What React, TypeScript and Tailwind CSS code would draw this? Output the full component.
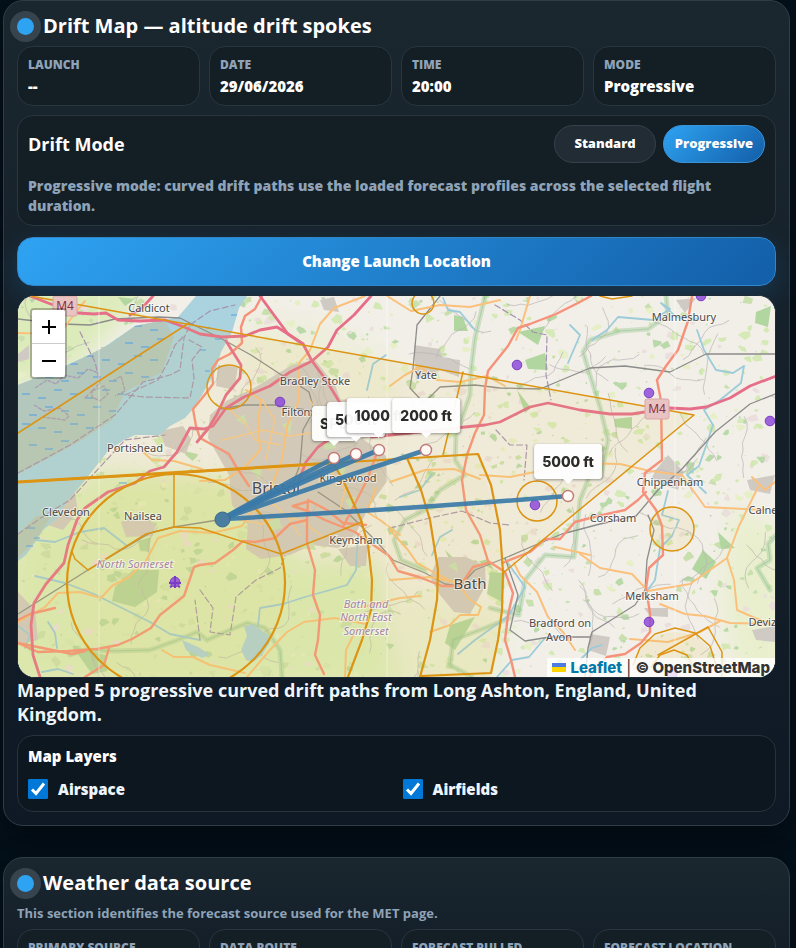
import type { ReactNode } from "react";

const LEFT = 18;
const TOP = 296;
const WIDTH = 757;
const HEIGHT = 381;

type Label = { x: number; y: number; text: string; size?: number; area?: boolean };

const places: Label[] = [
  { x: 149, y: 312, text: "Caldicot" },
  { x: 135, y: 452, text: "Portishead" },
  { x: 66, y: 516, text: "Clevedon" },
  { x: 143, y: 520, text: "Nailsea" },
  { x: 315, y: 385, text: "Bradley Stoke" },
  { x: 296, y: 416, text: "Filton" },
  { x: 276, y: 494, text: "Bristol", size: 16 },
  { x: 348, y: 482, text: "Kingswood" },
  { x: 356, y: 544, text: "Keynsham" },
  { x: 426, y: 379, text: "Yate" },
  { x: 470, y: 589, text: "Bath", size: 15 },
  { x: 684, y: 321, text: "Malmesbury" },
  { x: 670, y: 486, text: "Chippenham" },
  { x: 613, y: 522, text: "Corsham" },
  { x: 763, y: 514, text: "Calne" },
  { x: 652, y: 600, text: "Melksham" },
  { x: 768, y: 626, text: "Devizes" },
  { x: 560, y: 627, text: "Bradford on" },
  { x: 559, y: 641, text: "Avon" },
  { x: 135, y: 568, text: "North Somerset", area: true },
  { x: 366, y: 608, text: "Bath and", area: true },
  { x: 366, y: 621, text: "North East", area: true },
  { x: 366, y: 635, text: "Somerset", area: true },
];

const airfields = [
  [280, 402], [517, 365], [649, 393], [701, 296], [770, 421], [535, 505], [649, 622], [672, 675], [175, 582],
];

const spokes = [
  { label: "SFC", x: 334, y: 458, path: "M222 519Q278 487 334 458" },
  { label: "500 ft", x: 356, y: 454, path: "M222 519Q289 485 356 454" },
  { label: "1000 ft", x: 379, y: 450, path: "M222 519Q300 482 379 450" },
  { label: "2000 ft", x: 426, y: 450, path: "M222 519Q324 483 426 450" },
  { label: "5000 ft", x: 568, y: 496, path: "M222 519Q395 510 568 496" },
];

const motorways = [
  "M30 296L48 303L62 308L78 313L94 314L106 313L118 320L140 321L165 320L184 327L200 334L222 337L245 336L260 330L277 327L288 334L303 344L312 361L326 380L340 403L350 425L372 437L400 434L430 431L465 427L485 425L500 422L530 407L548 403L580 410L610 414L632 414L670 408L690 409L706 407L730 398L750 386L776 376",
  "M260 296L271 311L288 334L303 344",
  "M371 296L354 315L337 330L328 347L312 361L290 372L270 386L244 397L226 408L213 426L204 429L190 428L177 452L164 467L150 471L135 483L108 492L85 508L77 520L68 545L64 563L46 584L34 603L31 625L33 655L40 677",
  "M226 341L241 365L240 378L226 395L217 414L208 429L197 442",
  "M153 296L142 308L130 315",
  "M298 482L306 462L318 447L350 425",
];

const trunks = [
  "M262 296L255 309L245 316L241 327L242 343L230 354L218 360L212 369L213 384L203 397L193 409L196 426L200 438L218 448L229 454L237 468L249 486",
  "M591 296L578 303L556 314L530 324L518 328L508 346L488 371L485 388L484 415L475 433L467 455L462 480L466 510L480 535L488 561L505 572L513 593L508 615L505 640L511 660L515 677",
  "M692 296L688 321L678 350L666 366L657 380L661 401L662 460L645 473L643 492L656 510L662 526L663 555L649 568L646 588L650 613L650 632L641 643L625 654L607 657L589 677",
  "M488 563L473 567L460 586L442 586L419 577L398 571L389 556L355 532L325 520L307 511L293 506",
  "M308 500L307 520L307 543L315 570L313 595L320 615L318 640L315 655L324 674",
  "M307 520L290 524L275 538L255 542L243 541L233 550L215 563L200 565L194 567L184 596L160 615L151 628L132 639L118 645L97 649L68 651L38 652L18 643",
  "M109 648L104 665L85 677", "M85 651L72 654L18 643",
  "M560 539L575 522L598 516L625 510L638 500L646 492",
  "M502 563L530 552L545 539L560 539", "M378 450L367 480L343 527",
  "M293 506L310 501L327 510L343 523L366 525",
  "M18 620L30 614L55 608",
];

const primaries = [
  "M365 296L334 308L320 324L310 350L299 363L299 400L287 426L282 460L272 485L251 513L242 526L212 533L180 531L158 538L146 561L129 577L112 586L101 598L80 592L58 593L45 607L18 622",
  "M246 390L261 400L258 422L260 450L246 466L225 480L200 481",
  "M530 296L520 330L516 340", "M390 386L405 375L420 367L437 380L460 382L487 376L505 386",
  "M390 530L408 550L417 563L435 573L460 586", "M390 580L430 577L455 582L466 580",
  "M460 586L469 599L481 607L478 615L460 615L450 625L430 632",
  "M362 607L400 598L420 596", "M247 677L270 650L287 632L304 622L335 618L366 624",
  "M345 677L346 650L356 630", "M514 563L520 575L537 592L548 617L563 632L575 650",
  "M480 475L510 477L540 471L575 463L620 464L650 471L682 475L705 507L765 510",
  "M580 554L600 568L632 574L648 591L690 584L720 563L727 558L739 526L758 487",
  "M727 558L734 580L737 610L755 618L769 623", "M660 604L685 614L705 616L730 623L775 624",
  "M630 639L668 642L700 632L720 621", "M775 482L765 490L752 477",
  "M18 333L60 334L75 313L85 301", "M143 452L152 460L174 461L202 469",
  "M162 650L174 657L193 657L210 665L245 673", "M387 296L411 311L440 305L470 307L500 300",
  "M390 482L425 470L454 469L480 479", "M376 488L367 512L380 520L400 535",
  "M555 547L590 555",
];

const streets = [
  "M230 410L246 424L255 440L280 445", "M222 440L240 436L262 430L290 436L318 432",
  "M268 470L290 464L312 470L335 466", "M255 498L275 505L290 520L300 536",
  "M240 520L262 524L280 515L300 520L322 536", "M330 470L345 490L340 510",
  "M262 400L275 420L270 440L266 460", "M310 400L320 418L335 430",
];

const rails = [
  "M18 614L88 570L150 533L174 527L218 520L258 503L270 492L293 483L300 465L303 430L314 410L309 392L294 382L280 374L251 355L222 339L180 318L158 317L115 319L90 325L62 324L18 319",
  "M440 296L417 325L413 369L410 388L423 402L430 397L440 387L475 385L500 388L540 389L590 368L625 366L670 372L706 354L718 354L775 354",
  "M318 492L345 510L375 540L393 560L425 573L445 584L460 586L475 570L505 558L533 546L562 534L600 524L636 516",
  "M636 516L658 490L681 470L715 432L750 404L775 394",
  "M648 515L654 530L647 560L645 590L635 605L608 622L592 632L588 648L585 677",
  "M505 558L518 595L510 630L525 641L550 637L590 637",
  "M220 409L245 405L275 405L312 411L335 420",
];

const rivers = [
  "M432 555L440 537L452 530", "M18 430L36 428",
  "M592 340L607 330L618 317L653 320L670 309L661 303L676 317L697 319",
  "M697 330L704 350L716 370L733 373L744 366L741 383L720 400L704 410L713 425L706 446L699 466L687 475L706 493",
  "M668 491L662 515L679 520L672 536L660 548L655 580L645 594",
  "M36 540L55 542L80 532L104 528L126 545",
  "M35 576L65 583L94 594L120 607L150 622L170 634L200 640",
  "M42 672L58 669L73 674", "M48 622L55 633L57 648",
  "M358 535L356 570L347 585L330 590L305 597L283 604L260 608L258 626",
  "M443 298L448 310L460 312L475 330", "M497 677L512 660L529 657L545 638",
  "M570 325L580 335L568 363", "M386 355L373 364L367 390",
  "M400 497L420 490L432 474", "M505 559L525 587L509 615L500 622L475 640L458 654",
  "M18 626L30 635L25 648", "M581 659L592 648L602 645",
];

const protectedEdges = [
  "M485 296L475 338L471 370L470 395L456 435L455 460L465 475L440 490L425 510L405 520L394 540L401 560L425 570",
  "M592 470L580 500L574 557L545 555L525 580L519 615L490 608",
  "M666 296L668 315L648 329L620 331L590 340L583 352L590 375L600 407L608 440L601 476",
  "M775 536L768 544L770 560L757 568L770 590",
  "M207 640L230 630L247 623L265 628L280 650L282 677",
  "M70 655L85 650L115 651L150 650L175 641L197 632L207 640",
  "M472 677L450 665L453 640L480 630L510 618",
];

const boundaries = [
  "M80 332L95 362L100 383L85 398", "M183 337L175 345L168 362L158 380L125 395L145 397L190 398L194 378L192 360L202 347L189 340",
  "M18 473L70 445L115 415L143 382L170 375L180 370L184 338L190 325L210 311L235 305",
  "M18 534L45 515L70 500L100 467L125 440L165 435",
  "M495 305L520 320L533 332L547 335L546 375L551 400", "M496 430L510 445L527 445L524 480",
  "M200 590L213 608L210 632L230 635L236 597L256 580L280 568L285 556",
  "M390 528L430 518L462 511L490 523L510 525", "M200 640L195 600",
];

const woods = [
  "M115 587L133 570L159 570L157 592L135 607L112 601Z", "M138 541L151 537L149 552L140 550Z",
  "M454 315L463 317L468 331L454 331Z", "M518 332L545 326L538 345Z",
  "M525 360L545 353L548 370L528 369Z", "M445 550L462 566L488 559L494 570L475 560L455 572Z",
  "M490 572L505 573L502 602L487 594Z", "M718 532L735 548L721 549Z",
  "M703 550L716 562L706 579L692 569Z", "M756 312L771 306L768 327L755 323Z",
  "M450 625L475 617L455 650L445 643Z", "M72 646L105 655L107 671L92 674Z",
  "M118 297L135 299L125 306Z", "M185 646L203 654L192 658Z",
  "M614 419L632 417L632 429L615 427Z", "M517 390L531 408L525 413Z",
];

const settlements = [
  "M226 401L254 388L292 365L315 360L335 385L352 431L386 456L388 480L370 505L355 535L338 548L312 545L290 555L261 559L246 549L248 525L232 505L229 475L208 438L210 415Z",
  "M335 400L375 398L388 431L360 440Z",
  "M218 365L238 367L234 390L216 386Z", "M160 431L183 426L191 439L186 454L165 446Z",
  "M121 522L141 514L156 525L152 536L126 537Z", "M60 498L75 492L78 512L63 530L48 525L57 512Z",
  "M338 549L368 545L366 566L350 566Z", "M414 345L440 349L442 358L460 360L459 377L440 370L416 380Z",
  "M438 557L466 557L485 566L486 585L470 614L454 612L440 595L430 577Z",
  "M655 471L668 455L684 472L678 490L651 480Z", "M747 480L775 475L770 494L750 490Z",
  "M644 608L668 608L668 617L650 616Z", "M590 634L610 637L606 656L588 650Z",
  "M18 592L35 610L38 640L18 645Z", "M18 354L29 345L29 359L18 362Z",
  "M676 300L696 298L685 313Z", "M320 300L334 297L339 312L324 310Z",
  "M35 320L57 318L60 327L35 329Z", "M752 630L775 626L775 642L756 640Z",
];

const parks = [
  "M268 520L278 516L282 528L270 531Z", "M250 470L262 466L260 480Z", "M322 440L334 436L336 448L325 450Z",
  "M345 500L356 496L352 512Z", "M300 548L312 540L316 550Z", "M236 420L244 414L248 426Z",
  "M335 470L346 464L344 476Z", "M282 425L292 420L290 434Z", "M448 566L456 562L458 572Z",
];

const airspaceBold = [
  "M18 482L174 473L333 463L478 454L491 485L500 530L503 572L502 610L498 640L491 673L421 676",
  "M333 463L343 480L361 520L368 545L372 580L371 610L362 640L348 677",
  "M407 458L421 490L430 520L438 570L437 600L430 640L420 677",
];

const airspaceLines = [
  "M30 296L694 415L503 573", "M18 433L189 323", "M463 372L443 455",
  "M174 473L174 527L146 534L88 570L75 559L72 552", "M174 527L200 528L281 554L362 522",
  "M658 655L708 627L722 652V677", "M633 665L640 648L655 634L675 628L695 633L710 646L716 665",
  "M651 667L660 655L674 650L687 655L693 667", "M600 296L612 299L632 296",
];

const mudflat =
  "M18 385L55 371L85 357L110 344L135 326L165 320L174 337L162 372L125 392L112 420L82 440L55 455L18 474Z";

// Repeatable noise keeps the fields and lanes in the same place on every render.
function noise(seed: number) {
  const value = Math.sin(seed * 127.1 + 311.7) * 43758.5453;
  return value - Math.floor(value);
}

const fields = Array.from({ length: 1700 }, (_, i) => {
  const x = LEFT + noise(i + 1) * WIDTH;
  const y = TOP + noise(i + 2001) * HEIGHT;
  const r = 0.8 + noise(i + 4001) ** 2 * 5;
  const corners = [0, 1, 2, 3, 4].map((n) => {
    const angle = n * 1.257 + noise(i + n * 17);
    const reach = r * (0.6 + noise(i * 3 + n) * 0.8);
    return `${(x + Math.cos(angle) * reach).toFixed(1)} ${(y + Math.sin(angle) * reach * 0.8).toFixed(1)}`;
  });
  return { d: `M${corners.join("L")}Z`, tone: i % 6 };
});

const fieldTones = ["#c9e0ae", "#d6eab8", "#b9d9a8", "#e6efc6", "#eadfdc", "#d3e8b2"];

const lanes = Array.from({ length: 85 }, (_, i) => {
  let x = LEFT + noise(i + 51) * WIDTH;
  let y = TOP + noise(i + 951) * HEIGHT;
  let heading = noise(i + 71) * 6.28;
  let d = `M${x.toFixed(1)} ${y.toFixed(1)}`;
  for (let n = 0; n < 9; n += 1) {
    heading += (noise(i * 11 + n) - 0.5) * 1.1;
    x += Math.cos(heading) * 7;
    y += Math.sin(heading) * 7;
    d += `L${x.toFixed(1)} ${y.toFixed(1)}`;
  }
  return d;
});

const shore =
  "M18 385L60 368L100 350L135 326L165 320L178 317L196 296H247L239 308L232 332L221 352L215 372L206 388L194 408L185 418L170 426L160 435L135 435L124 440L108 451L93 470L82 484L68 500L58 518L43 530L36 541L26 555L18 561Z";

const mudDashes = Array.from({ length: 80 }, (_, i) => ({
  x: 22 + (i % 10) * 16 + (Math.floor(i / 10) % 2) * 7,
  y: 322 + Math.floor(i / 10) * 17 + (i % 3) * 4,
}));

function Lines({ paths, stroke, width, dash, opacity }: {
  paths: string[]; stroke: string; width: number; dash?: string; opacity?: number;
}) {
  return (
    <g fill="none" stroke={stroke} strokeWidth={width} strokeDasharray={dash} opacity={opacity} strokeLinejoin="round" strokeLinecap="round">
      {paths.map((d) => <path key={d} d={d} />)}
    </g>
  );
}

function Motorway({ x, y }: { x: number; y: number }) {
  return (
    <g>
      <rect x={x - 12} y={y - 10} width="24" height="20" rx="2" fill="#e8c3c1" stroke="#d9a5a8" />
      <text x={x} y={y + 4} textAnchor="middle" fontSize="12" fill="#8b3045">M4</text>
    </g>
  );
}

function MapDrawing() {
  return (
    <svg viewBox="18 296 757 381" className="block h-full w-full font-['Noto_Sans',sans-serif]" role="img" aria-label="Map of drift paths around Bristol">
      <defs>
        <clipPath id="mud"><path d={mudflat} /></clipPath>
        <filter id="soften"><feGaussianBlur stdDeviation="12" /></filter>
      </defs>
      <rect x="18" y="296" width="757" height="381" fill="#f2efe9" />
      <g filter="url(#soften)">
        <path d="M0 280H160L80 365L0 395Z" fill="#dcebb9" />
        <path d="M10 540L100 470L240 480L300 560L380 560L400 690H0Z" fill="#d9edbb" />
        <path d="M240 310L330 320L400 360V450L240 380Z" fill="#eeeedb" />
        <path d="M400 590L510 610L500 690H400Z" fill="#e9efd6" />
        <path d="M735 500L790 540V690H740L720 600Z" fill="#e9efcd" />
      </g>
      {fields.map((f, i) => <path key={i} d={f.d} fill={fieldTones[f.tone]} />)}
      <g fill="#b2d6a0">{woods.map((d) => <path key={d} d={d} />)}</g>
      <g fill="#d0cac4">{settlements.map((d) => <path key={d} d={d} />)}</g>
      <g fill="#c8dfb4">{parks.map((d) => <path key={d} d={d} />)}</g>
      <Lines paths={protectedEdges} stroke="#a9cf9f" width={5} opacity={0.5} />
      <Lines paths={protectedEdges} stroke="#86b98a" width={1} opacity={0.45} />
      <Lines paths={lanes} stroke="#bbb7b6" width={0.9} opacity={0.8} />
      <path d={shore} fill="#aad3df" />
      <path d="M244 626L253 624L268 635L270 642L262 655L253 662L246 660L241 650L247 636Z" fill="#aad3df" />
      <path d="M182 640L200 648L210 655L202 658L186 650Z" fill="#aad3df" />
      <path d={mudflat} fill="#b3c7bd" />
      <path d="M18 534L36 516L52 515L36 540L18 558Z" fill="#b3c7bd" />
      <g stroke="#4f9fe8" strokeWidth="1.2" clipPath="url(#mud)">
        {mudDashes.map((m, i) => <path key={i} d={`M${m.x} ${m.y}h8`} />)}
      </g>
      <path d="M27 528h8M26 546h7M34 538h6M200 350h6M205 371h5M215 339h6M231 315h6M206 328h5M119 483h8" stroke="#4f9fe8" strokeWidth="1.2" />
      <path d="M35 388l12-8 9 4 8-9 14 3 10-9 11 4M34 405l10 6 16-3 9 8-4 4-22-3M92 391l12-5 4 8-8 7-8-4zM113 381l8-5 4 15-10 5" fill="none" stroke="#a99bb1" strokeWidth="1.3" strokeDasharray="4 1" />
      <Lines paths={rivers} stroke="#9ccbd9" width={1.8} />
      <Lines paths={boundaries} stroke="#a493ae" width={1.2} dash="6 3" />
      <Lines paths={rails} stroke="#8c8c8a" width={1.3} />
      <Lines paths={streets} stroke="#f8c78c" width={1.4} />
      <Lines paths={primaries} stroke="#fac07c" width={2} />
      <Lines paths={trunks} stroke="#f6917b" width={2.4} />
      <Lines paths={motorways} stroke="#e66e89" width={2.8} />
      <path d="M99 296V677M387 296V677M675 296V677" stroke="#fff" opacity="0.55" />

      <g fill="#e6c45a">
        <path d="M30 296L694 415L503 573L498 640L491 677H18V433L189 323Z" fillOpacity="0.11" />
        <path d="M18 482L478 454L500 530L502 610L491 677H18Z" fillOpacity="0.06" />
        <circle cx="176" cy="583" r="110" fillOpacity="0.06" />
        <circle cx="672" cy="529" r="22" fillOpacity="0.13" />
        <circle cx="675" cy="675" r="43" fillOpacity="0.16" />
      </g>
      <g fill="none" stroke="#dc9412">
        <circle cx="176" cy="583" r="109" strokeWidth="2.2" />
        <circle cx="229" cy="387" r="22" strokeWidth="1.4" />
        <circle cx="423" cy="303" r="11" strokeWidth="1.4" />
        <circle cx="537" cy="501" r="20" strokeWidth="1.5" />
        <circle cx="672" cy="529" r="22" strokeWidth="1.5" />
      </g>
      <Lines paths={airspaceBold} stroke="#dc9412" width={2.2} />
      <Lines paths={airspaceLines} stroke="#dc9412" width={1.5} />
      <path d="M18 482L333 463" stroke="#dc9412" strokeWidth="3" />

      <Motorway x={65} y={306} />
      <Motorway x={657} y={409} />
      {places.map((p) => (
        <text
          key={p.text + p.y}
          x={p.x}
          y={p.y}
          textAnchor="middle"
          fontSize={p.size ?? 11}
          fontStyle={p.area ? "italic" : undefined}
          fill={p.area ? "#a684a3" : "#4c4a48"}
          stroke="#fff"
          strokeWidth="2"
          strokeOpacity="0.6"
          paintOrder="stroke"
        >
          {p.text}
        </text>
      ))}
      <g fill="#8f4bd8" stroke="#7a3cc4" fillOpacity="0.85">
        {airfields.map(([x, y]) => <circle key={`${x}-${y}`} cx={x} cy={y} r="4.8" />)}
        <path d="M175 576v12M169 583h12M172 586l-2 1M178 586l2 1" strokeWidth="2" />
      </g>
      <g fill="none" stroke="#3a79a8" strokeWidth="4.6" strokeOpacity="0.92" strokeLinecap="round">
        {spokes.map((s) => <path key={s.label} d={s.path} />)}
      </g>
      <circle cx="222.500" cy="519.500" r="7.500" fill="#4a7d9f" stroke="#386c8e" />
      <g fill="#fffaf5" stroke="#c07a78" strokeWidth="1.4">
        {spokes.map((s) => <circle key={s.label} cx={s.x} cy={s.y} r="5.500" />)}
      </g>
    </svg>
  );
}

function DriftMap() {
  return (
    <div className="relative mt-[9px] overflow-hidden rounded-[18px] border border-[#1c2b36] bg-[#f2efe9]">
      <div className="aspect-[757/381]">
        <MapDrawing />
      </div>
      {spokes.map((s) => (
        <div
          key={s.label}
          className="absolute -translate-x-1/2 -translate-y-full pb-[17px] opacity-95"
          style={{ left: `${((s.x - LEFT) / WIDTH) * 100}%`, top: `${((s.y - TOP) / HEIGHT) * 100}%` }}
        >
          <div className="relative rounded-[3px] border border-white bg-white px-[7px] py-[7px] font-['Inter',sans-serif] text-[14px] leading-[19px] font-extrabold whitespace-nowrap text-[#222] shadow-[0_1px_3px_rgba(0,0,0,0.4)]">
            {s.label}
            <span className="absolute top-full left-1/2 -translate-x-1/2 border-x-6 border-t-6 border-x-transparent border-t-white" />
          </div>
        </div>
      ))}
      <div className="absolute top-[12px] left-[12px] flex flex-col overflow-hidden rounded-[4px] border-2 border-black/25 bg-clip-padding text-black">
        <button type="button" aria-label="Zoom in" className="grid h-[34px] w-[33px] place-items-center border-b border-[#ccc] bg-white">
          <svg width="14" height="14" viewBox="0 0 14 14" stroke="currentColor" strokeWidth="2"><path d="M0 7H14M7 0V14" /></svg>
        </button>
        <button type="button" aria-label="Zoom out" className="grid h-[33px] w-[33px] place-items-center bg-white">
          <svg width="14" height="14" viewBox="0 0 14 14" stroke="currentColor" strokeWidth="2"><path d="M0 7H14" /></svg>
        </button>
      </div>
      <div className="absolute right-0 bottom-0 flex items-center bg-white/80 px-[5px] font-['Inter',sans-serif] text-[15px] leading-[19px] font-extrabold text-[#333]">
        <a href="#leaflet" className="flex items-center gap-[4px] text-[#0078a8]">
          <svg width="14" height="9" viewBox="0 0 14 9"><path fill="#4c7be1" d="M0 0h14v5H0z" /><path fill="#ffd500" d="M0 4h14v5H0z" /></svg>
          Leaflet
        </a>
        <span className="font-normal whitespace-pre"> | </span>
        <span>© OpenStreetMap</span>
      </div>
    </div>
  );
}

function Card({ title, children }: { title: string; children: ReactNode }) {
  return (
    <section className="rounded-[20px] border border-[#303d46] bg-linear-to-b from-[#1b272f] to-[#0e1925] px-[13px] pt-[11px] pb-[13px] shadow-[0_14px_34px_rgba(0,0,0,0.4)]">
      <h2 className="flex items-center gap-[9px] text-[20px] leading-[28px] font-bold text-white">
        <span className="size-[17px] rounded-full bg-[#2ea3f2] shadow-[0_0_0_7px_#37444d]" />
        {title}
      </h2>
      {children}
    </section>
  );
}

function Stats({ items }: { items: [string, string][] }) {
  return (
    <dl className="grid grid-cols-4 gap-[9px]">
      {items.map(([name, value]) => (
        <div key={name} className="rounded-[16px] border border-[#2a363e] bg-[#131e25] px-[10px] py-[9px]">
          <dt className="text-[12px] leading-[17px] font-extrabold text-[#8fa3b8]">{name}</dt>
          <dd className="mt-[3px] text-[15px] leading-[20px] font-extrabold text-white">{value}</dd>
        </div>
      ))}
    </dl>
  );
}

function LayerToggle({ id, label }: { id: string; label: string }) {
  return (
    <div className="flex items-center gap-[10px]">
      <span className="relative grid size-[20px] place-items-center">
        <input id={id} type="checkbox" defaultChecked className="peer size-[20px] appearance-none rounded-[1px] border border-[#8a98a5] checked:border-[#0078d7] checked:bg-[#0078d7]" />
        <svg viewBox="0 0 20 20" className="pointer-events-none absolute inset-0 hidden peer-checked:block" fill="none" stroke="#fff" strokeWidth="3">
          <path d="M4 10.500L8 14.500L16 4.500" />
        </svg>
      </span>
      <label htmlFor={id} className="text-[15px] leading-[22px] font-extrabold text-[#eef5fc]">{label}</label>
    </div>
  );
}

export default function App() {
  return (
    <main className="h-screen overflow-hidden bg-[#04101a] font-['Open_Sans','Noto_Sans',sans-serif]">
      <div className="flex flex-col gap-[31px] pr-[6px] pl-[3px]">
        <Card title="Drift Map — altitude drift spokes">
          <div className="mt-[6px]">
            <Stats items={[["LAUNCH", "--"], ["DATE", "29/06/2026"], ["TIME", "20:00"], ["MODE", "Progressive"]]} />
          </div>
          <section className="mt-[9px] rounded-[16px] border border-[#2a363e] bg-[#131e25] px-[10px] py-[9px]">
            <div className="flex items-center justify-between">
              <h3 className="text-[18px] leading-[24px] font-bold text-white">Drift Mode</h3>
              <div className="flex gap-[7px]">
                <button type="button" className="h-[38px] w-[102px] rounded-full border border-[#35414a] bg-[#222c34] text-[13px] font-extrabold text-white">Standard</button>
                <button type="button" className="h-[38px] w-[102px] rounded-full border border-[#3b93d8] bg-[linear-gradient(135deg,#2ea3f2,#135ea8)] text-[13px] font-extrabold text-white">Progressive</button>
              </div>
            </div>
            <p className="mt-[13px] text-[14px] leading-[20px] font-extrabold text-[#8fa3b8]">
              Progressive mode: curved drift paths use the loaded forecast profiles across the selected flight duration.
            </p>
          </section>
          <button type="button" className="mt-[11px] h-[49px] w-full rounded-[16px] border border-[#2f86c9] bg-[linear-gradient(135deg,#2ea3f2,#135ea8)] text-[15px] font-extrabold text-white shadow-[0_10px_28px_rgba(30,120,190,0.25)]">
            Change Launch Location
          </button>
          <DriftMap />
          <p className="text-[18px] leading-[24px] font-bold text-[#eef5fc]">
            Mapped 5 progressive curved drift paths from Long Ashton, England, United Kingdom.
          </p>
          <fieldset className="mt-[9px] rounded-[16px] border border-[#27333c] bg-[#0d1720] px-[10px] pt-[10px] pb-[11px]">
            <legend className="float-left w-full text-[15px] leading-[21px] font-extrabold text-white">Map Layers</legend>
            <div className="clear-both grid grid-cols-2 gap-x-[12px] pt-[11px]">
              <LayerToggle id="airspace" label="Airspace" />
              <LayerToggle id="airfields" label="Airfields" />
            </div>
          </fieldset>
        </Card>
        <Card title="Weather data source">
          <p className="mt-[6px] mb-[6px] text-[13px] leading-[20px] font-bold text-[#8fa3b8]">
            This section identifies the forecast source used for the MET page.
          </p>
          <Stats items={[["PRIMARY SOURCE", "Open-Meteo"], ["DATA ROUTE", "Direct"], ["FORECAST PULLED", "--"], ["FORECAST LOCATION", "--"]]} />
        </Card>
      </div>
    </main>
  );
}
